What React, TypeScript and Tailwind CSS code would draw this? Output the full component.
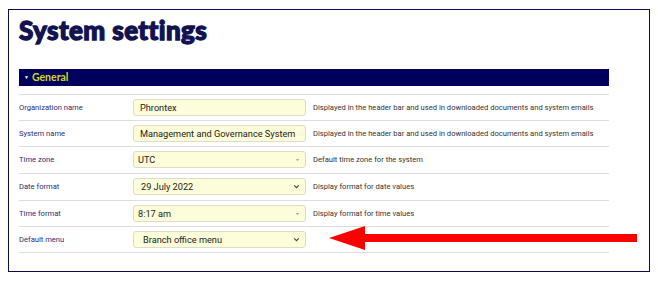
const ROWS = [
  { label: 'Organization name', kind: 'text', value: 'Phrontex', help: 'Displayed in the header bar and used in downloaded documents and system emails', h: 'h-[26px]' },
  { label: 'System name', kind: 'text', value: 'Management and Governance System', help: 'Displayed in the header bar and used in downloaded documents and system emails', h: 'h-[26px]' },
  { label: 'Time zone', kind: 'locked', value: 'UTC', help: 'Default time zone for the system', h: 'h-[27px]' },
  { label: 'Date format', kind: 'select', value: '29 July 2022', help: 'Display format for date values', h: 'h-[27px]' },
  { label: 'Time format', kind: 'locked', value: '8:17 am', help: 'Display format for time values', h: 'h-[26px]' },
  { label: 'Default menu', kind: 'select', value: 'Branch office menu', help: '', h: 'h-[26px]' },
];

function Chevron() {
  return (
    <svg width="7" height="5" viewBox="0 0 7 5" className="shrink-0">
      <path d="M1.2 1.3 L3.5 3.6 L5.8 1.3" fill="none" stroke="#444" strokeWidth="1.1" />
    </svg>
  );
}

function SmallTriangle() {
  return (
    <svg width="5" height="4" viewBox="0 0 5 4" className="shrink-0">
      <path d="M0.6 0.9 L4.4 0.9 L2.5 3.2 Z" fill="#b0b0b0" />
    </svg>
  );
}

function Field({ kind, value }: { kind: string; value: string }) {
  const pad = kind === 'select' ? (value.startsWith('Branch') ? 'pl-[9px]' : 'pl-[7px]') : kind === 'locked' ? 'pl-[4px]' : 'pl-[6px]';
  return (
    <div
      className={`flex h-[17px] w-[173px] items-center justify-between rounded-[3px] border border-[#dcdcc8] bg-[#fdfdd9] ${pad} pr-[5px] text-[9.2px] whitespace-nowrap text-[#222]`}
    >
      <span>{value}</span>
      {kind === 'select' && <Chevron />}
      {kind === 'locked' && <SmallTriangle />}
    </div>
  );
}

export default function App() {
  return (
    <div className="pl-[8px] pt-[9px] font-['Roboto',sans-serif]">
      <div className="h-[263px] w-[642px] border border-[#0b0b55] pl-[10px] pt-[5px]">
        <h1 className="font-['Lato_Black','Lato',sans-serif] text-[26px] leading-[30px] font-black tracking-[0.4px] text-[#121250] [-webkit-text-stroke:1.3px_#121250]">
          System settings
        </h1>
        <div className="mt-[24px] flex h-[17px] w-[590px] items-center bg-[#00005c] pl-[5px] font-['Lato',sans-serif] text-[10.5px] font-bold text-[#d4d820]">
          <span className="mr-[3px] text-[5px] text-white">▼</span>
          General
        </div>
        <div className="mt-[8px] w-[590px] border-t border-[#dddddd]">
          {ROWS.map((r) => (
            <div key={r.label} className={`flex ${r.h} border-b border-[#dddddd]`}>
              <div className="w-[114px] pt-[7px] text-[7.6px] text-[#2b2b7a]">{r.label}</div>
              <div className="pt-[4px]">
                <Field kind={r.kind} value={r.value} />
              </div>
              <div className="pl-[7px] pt-[7px] text-[7.6px] text-[#333]">{r.help}</div>
            </div>
          ))}
        </div>
      </div>
      <svg width="310" height="26" viewBox="0 0 310 26" className="absolute left-[329px] top-[225px]">
        <polygon points="0,13 36,1 36,9 308,9 308,17 36,17 36,25" fill="#ff0000" />
      </svg>
    </div>
  );
}
